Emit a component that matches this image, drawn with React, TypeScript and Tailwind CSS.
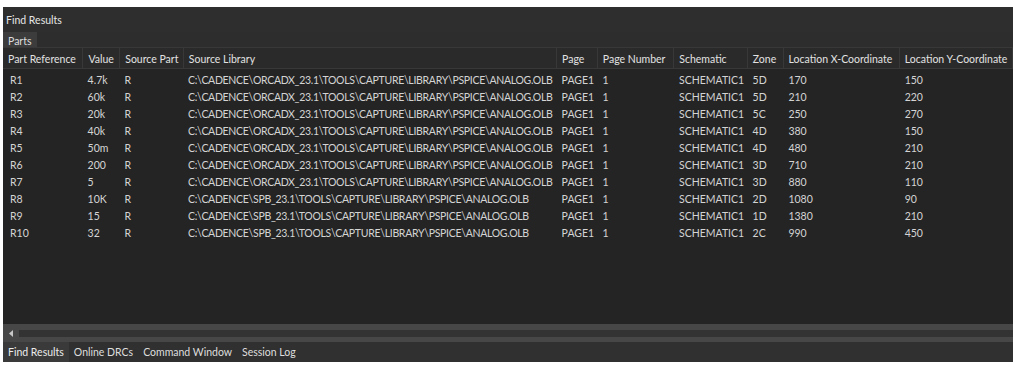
const columns = [
  { name: 'Part Reference', w: 80 },
  { name: 'Value', w: 36 },
  { name: 'Source Part', w: 63 },
  { name: 'Source Library', w: 375 },
  { name: 'Page', w: 40 },
  { name: 'Page Number', w: 76 },
  { name: 'Schematic', w: 73 },
  { name: 'Zone', w: 35 },
  { name: 'Location X-Coordinate', w: 116 },
  { name: 'Location Y-Coordinate', w: 113 },
]

const ORCAD = 'C:\\CADENCE\\ORCADX_23.1\\TOOLS\\CAPTURE\\LIBRARY\\PSPICE\\ANALOG.OLB'
const SPB = 'C:\\CADENCE\\SPB_23.1\\TOOLS\\CAPTURE\\LIBRARY\\PSPICE\\ANALOG.OLB'

const rows = [
  ['R1', '4.7k', 'R', ORCAD, 'PAGE1', '1', 'SCHEMATIC1', '5D', '170', '150'],
  ['R2', '60k', 'R', ORCAD, 'PAGE1', '1', 'SCHEMATIC1', '5D', '210', '220'],
  ['R3', '20k', 'R', ORCAD, 'PAGE1', '1', 'SCHEMATIC1', '5C', '250', '270'],
  ['R4', '40k', 'R', ORCAD, 'PAGE1', '1', 'SCHEMATIC1', '4D', '380', '150'],
  ['R5', '50m', 'R', ORCAD, 'PAGE1', '1', 'SCHEMATIC1', '4D', '480', '210'],
  ['R6', '200', 'R', ORCAD, 'PAGE1', '1', 'SCHEMATIC1', '3D', '710', '210'],
  ['R7', '5', 'R', ORCAD, 'PAGE1', '1', 'SCHEMATIC1', '3D', '880', '110'],
  ['R8', '10K', 'R', SPB, 'PAGE1', '1', 'SCHEMATIC1', '2D', '1080', '90'],
  ['R9', '15', 'R', SPB, 'PAGE1', '1', 'SCHEMATIC1', '1D', '1380', '210'],
  ['R10', '32', 'R', SPB, 'PAGE1', '1', 'SCHEMATIC1', '2C', '990', '450'],
]

const tabs = ['Find Results', 'Online DRCs', 'Command Window', 'Session Log']

export default function App() {
  return (
    <div className="w-[1015px] h-[370px] bg-white pt-[7px] pl-[3px] pr-[2px] pb-[8px] text-[10.5px] leading-[14px] text-[#d4d4d4] font-['Lato','Open_Sans',sans-serif]">
      <div className="flex flex-col h-full bg-[#2b2b2b]">
        {/* title */}
        <div className="h-[25px] flex items-center px-[3px] text-[#e6e6e6] bg-[#2e2e2e]">Find Results</div>

        {/* sub tabs */}
        <div className="h-[15px] flex items-end bg-[#2d2d2d]">
          <div className="h-[15px] px-[5px] pt-[2px] flex items-center bg-[#3c3c3c] text-[#dcdcdc]">Parts</div>
        </div>

        {/* table */}
        <div className="flex-1 bg-[#242424] overflow-hidden">
          <div className="flex h-[22px] bg-[#383838] gap-px pt-px pb-px">
            {columns.map((c) => (
              <div key={c.name} className="flex items-center px-[5px] pt-[2px] bg-[#2a2a2a] text-[#e2e2e2] whitespace-nowrap overflow-hidden" style={{ width: c.w }}>
                {c.name}
              </div>
            ))}
            <div className="flex-1 bg-[#2a2a2a]" />
          </div>
          <div className="pt-[2px]">
            {rows.map((r) => (
              <div key={r[0]} className="flex h-[17px] items-center">
                {r.map((v, i) => (
                  <div
                    key={i}
                    className={`whitespace-nowrap overflow-hidden ${i === 0 ? 'pl-[7px] pr-[5px]' : 'px-[5px]'} ${i === 3 ? 'pr-0 tracking-[-0.3px]' : ''}`}
                    style={{ width: columns[i].w + (i === 0 ? 0 : 1) }}
                  >
                    {v}
                  </div>
                ))}
              </div>
            ))}
          </div>
        </div>

        {/* horizontal scrollbar */}
        <div className="h-[18px] bg-[#474747] flex items-center">
          <div className="w-[16px] flex justify-center">
            <svg width="4" height="7" viewBox="0 0 4 7">
              <path d="M4 0 L0 3.5 L4 7 Z" fill="#c8c8c8" />
            </svg>
          </div>
          <div className="flex-1 h-[7px] bg-[#333333]" />
        </div>

        {/* bottom tabs */}
        <div className="h-[20px] flex items-stretch bg-[#303030]">
          {tabs.map((t, i) => (
            <div key={t} className={`flex items-center px-[5px] ${i === 0 ? 'bg-[#3a3a3a] text-[#ececec]' : 'text-[#dedede]'}`}>
              {t}
            </div>
          ))}
        </div>
      </div>
    </div>
  )
}
